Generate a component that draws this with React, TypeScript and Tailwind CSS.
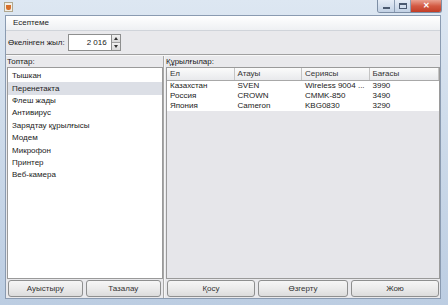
import React from "react";

const font = { fontFamily: '"Liberation Sans", Arial, sans-serif' };

function Btn({ label, className }: { label: string; className: string }) {
  return (
    <div
      className={
        "h-[17px] flex items-center justify-center rounded-[3px] border border-[#8e8f8f] bg-gradient-to-b from-[#f6f6f6] via-[#ebebeb] to-[#dcdcdc] text-[8px] text-[#333] " +
        className
      }
    >
      {label}
    </div>
  );
}

export default function App() {
  const groups = [
    "Тышкан",
    "Перенетакта",
    "Флеш жады",
    "Антивирус",
    "Зарядтау құрылғысы",
    "Модем",
    "Микрофон",
    "Принтер",
    "Веб-камера",
  ];
  const rows = [
    ["Казахстан", "SVEN", "Wireless 9004 ...", "3990"],
    ["Россия", "CROWN", "CMMK-850", "3490"],
    ["Япония", "Cameron", "KBG0830", "3290"],
  ];
  return (
    <div
      style={font}
      className="w-[448px] h-[305px] flex flex-col bg-gradient-to-b from-[#dde7f2] via-[#cbd9e9] to-[#bccde2] overflow-hidden"
    >
      {/* title bar */}
      <div className="h-[15px] flex items-start shrink-0">
        <div className="ml-[4px] mt-[2px] w-[9px] h-[10px] bg-[#f3efe6] border border-[#b0a890] flex items-center justify-center">
          <div className="w-[5px] h-[5px] rounded-b-[2px] bg-[#d7702c]" />
        </div>
        <div className="flex-1" />
        <div className="flex mr-[6px] h-[13px] rounded-b-[3px] overflow-hidden border border-t-0 border-[#7d8ea5]">
          <div className="w-[17px] bg-gradient-to-b from-[#e6edf6] to-[#c2d1e4] flex items-center justify-center border-r border-[#8c9db3]">
            <div className="w-[7px] h-[2px] bg-[#4b5a70] mt-[3px]" />
          </div>
          <div className="w-[16px] bg-gradient-to-b from-[#e6edf6] to-[#c2d1e4] flex items-center justify-center border-r border-[#8c9db3]">
            <div className="w-[8px] h-[6px] border border-[#4b5a70] border-t-2" />
          </div>
          <div className="w-[30px] bg-gradient-to-b from-[#e9a191] via-[#d35a43] to-[#c23d26] flex items-center justify-center text-white text-[8px] font-bold leading-none">
            ✕
          </div>
        </div>
      </div>

      {/* client */}
      <div className="flex-1 ml-[5px] mr-[7px] mb-[6px] flex flex-col bg-[#e9e9ec] border border-[#8a9bb1]">
        {/* menu bar */}
        <div className="h-[15px] shrink-0 flex items-center bg-gradient-to-b from-[#ffffff] to-[#eef0f3] border-b border-[#d0d4da]">
          <span className="ml-[7px] text-[8px] text-[#222]">Есептеме</span>
        </div>
        {/* toolbar */}
        <div className="h-[24px] shrink-0 flex items-center border-b border-[#a0a0a0]">
          <span className="ml-[2px] text-[8px] text-[#222]">Өкелінген жыл:</span>
          <div className="ml-[3px] flex h-[17px]">
            <div className="w-[44px] h-full bg-white border border-[#8e8f8f] flex items-center justify-end pr-[4px] text-[8px] text-[#222]">
              2 016
            </div>
            <div className="w-[9px] h-full flex flex-col border border-l-0 border-[#8e8f8f]">
              <div className="flex-1 bg-gradient-to-b from-[#f2f2f2] to-[#d8d8d8] flex items-center justify-center border-b border-[#a0a0a0]">
                <div className="w-0 h-0 border-l-[2px] border-r-[2px] border-b-[3px] border-l-transparent border-r-transparent border-b-[#333]" />
              </div>
              <div className="flex-1 bg-gradient-to-b from-[#f2f2f2] to-[#d8d8d8] flex items-center justify-center">
                <div className="w-0 h-0 border-l-[2px] border-r-[2px] border-t-[3px] border-l-transparent border-r-transparent border-t-[#333]" />
              </div>
            </div>
          </div>
        </div>

        {/* main */}
        <div className="flex-1 flex border-t border-[#f8f8f8]">
          {/* left */}
          <div className="w-[158px] flex flex-col border-r border-[#a8a8a8]">
            <div className="h-[11px] flex items-center pl-[1px] text-[8px] text-[#222] leading-none">
              Топтар:
            </div>
            <div className="flex-1 ml-[1px] bg-white border border-[#9a9a9a] pt-[2px]">
              {groups.map((g, i) => (
                <div
                  key={g}
                  className={
                    "h-[12.4px] flex items-center pl-[4px] text-[8px] text-[#222] " +
                    (i === 1 ? "bg-[#dcdfe6]" : "")
                  }
                >
                  {g}
                </div>
              ))}
            </div>
            <div className="h-[19px] flex items-center gap-[3px] px-[2px]">
              <Btn label="Ауыстыру" className="w-[75px]" />
              <Btn label="Тазалау" className="w-[76px]" />
            </div>
          </div>
          {/* right */}
          <div className="flex-1 flex flex-col border-l border-[#f6f6f6]">
            <div className="h-[11px] flex items-center pl-[1px] text-[8px] text-[#222] leading-none">
              Құрылғылар:
            </div>
            <div className="flex-1 ml-[1px] mr-[1px] bg-[#e6e6ea] border border-[#9a9a9a] flex flex-col">
              <div className="h-[13px] flex bg-gradient-to-b from-[#fbfbfb] to-[#e8e9ec] border-b border-[#a8a8a8]">
                {["Ел", "Атауы", "Сериясы", "Бағасы"].map((h, i) => (
                  <div
                    key={h}
                    className={
                      "flex items-center pl-[3px] text-[8px] text-[#333] border-r border-[#c4c4c4] " +
                      (i === 3 ? "flex-1" : "w-[67.5px]")
                    }
                  >
                    {h}
                  </div>
                ))}
              </div>
              <div className="bg-white">
                {rows.map((r) => (
                  <div key={r[0]} className="h-[10px] flex">
                    {r.map((c, i) => (
                      <div
                        key={i}
                        className={
                          "flex items-center pl-[3px] text-[8px] text-[#222] leading-none whitespace-nowrap overflow-hidden " +
                          (i === 3 ? "flex-1" : "w-[67.5px]")
                        }
                      >
                        {c}
                      </div>
                    ))}
                  </div>
                ))}
              </div>
            </div>
            <div className="h-[19px] flex items-center gap-[3px] px-[2px]">
              <Btn label="Қосу" className="w-[88px]" />
              <Btn label="Өзгерту" className="w-[90px]" />
              <Btn label="Жою" className="w-[88px]" />
            </div>
          </div>
        </div>
      </div>
    </div>
  );
}
